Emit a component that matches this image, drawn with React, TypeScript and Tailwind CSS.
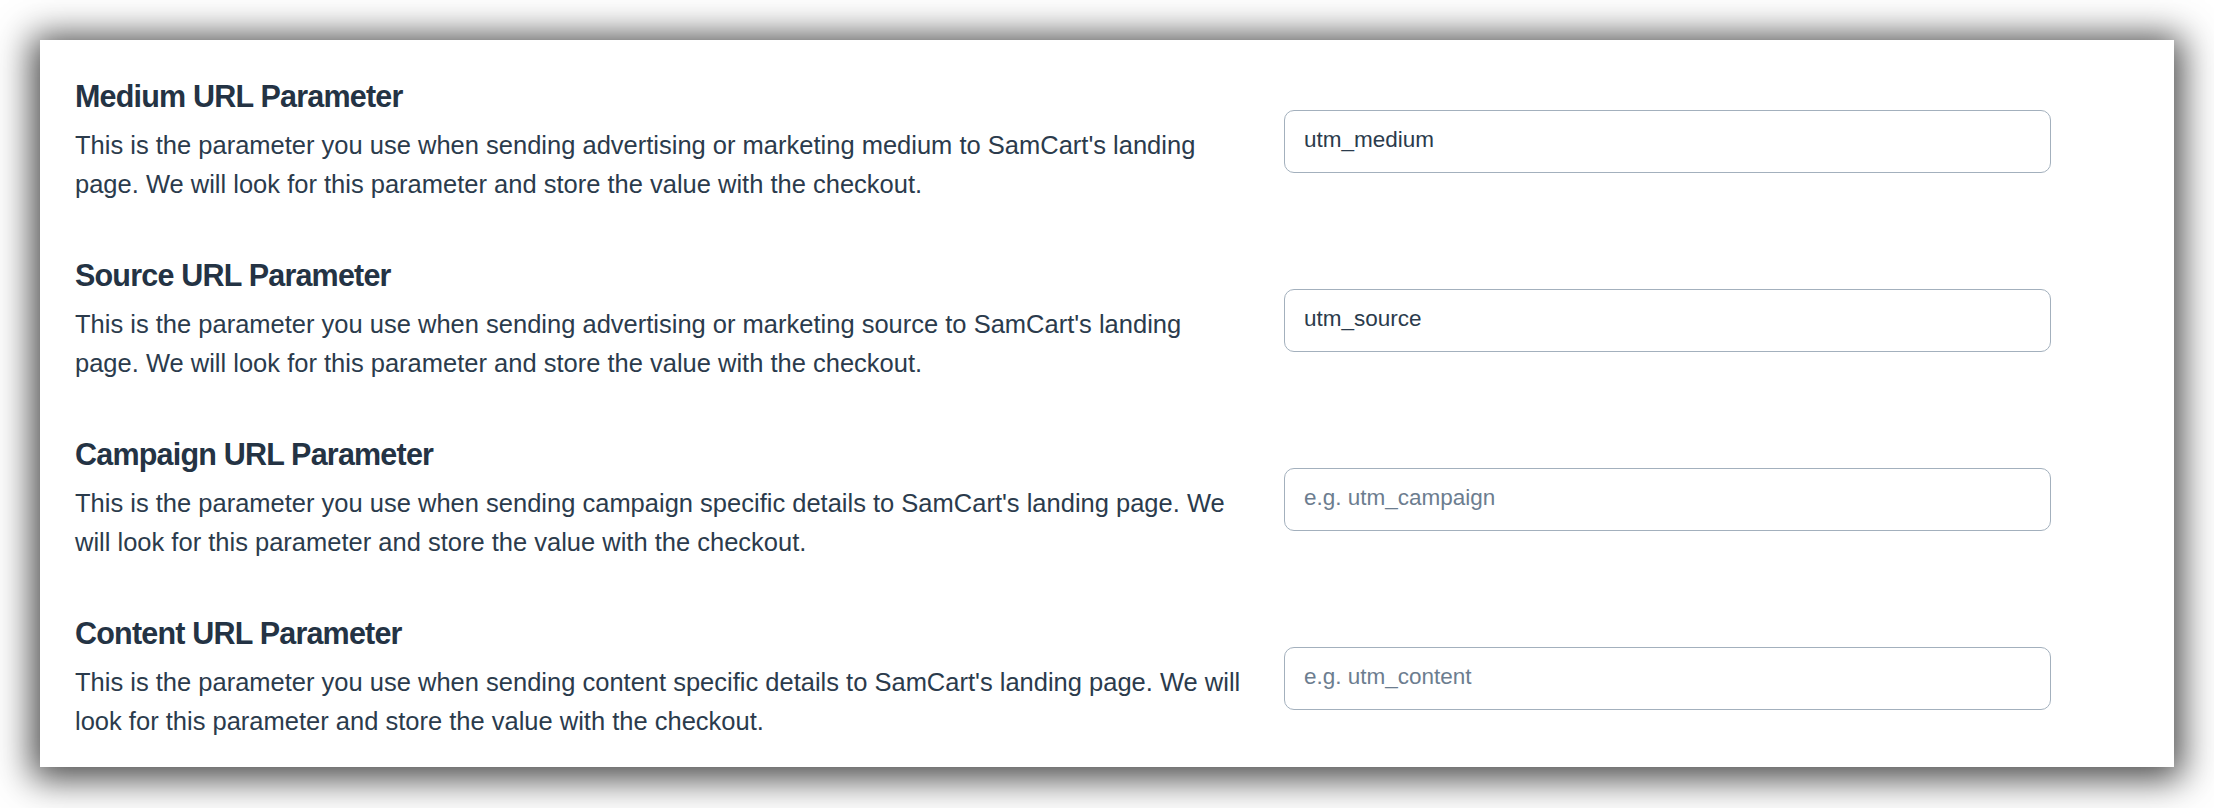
import React from "react";

type Param = {
  title: string;
  description: string;
  value?: string;
  placeholder: string;
};

const params: Param[] = [
  {
    title: "Medium URL Parameter",
    description:
      "This is the parameter you use when sending advertising or marketing medium to SamCart's landing page. We will look for this parameter and store the value with the checkout.",
    value: "utm_medium",
    placeholder: "e.g. utm_medium",
  },
  {
    title: "Source URL Parameter",
    description:
      "This is the parameter you use when sending advertising or marketing source to SamCart's landing page. We will look for this parameter and store the value with the checkout.",
    value: "utm_source",
    placeholder: "e.g. utm_source",
  },
  {
    title: "Campaign URL Parameter",
    description:
      "This is the parameter you use when sending campaign specific details to SamCart's landing page. We will look for this parameter and store the value with the checkout.",
    placeholder: "e.g. utm_campaign",
  },
  {
    title: "Content URL Parameter",
    description:
      "This is the parameter you use when sending content specific details to SamCart's landing page. We will look for this parameter and store the value with the checkout.",
    placeholder: "e.g. utm_content",
  },
];

export default function App() {
  return (
    <div className="min-h-[808px] bg-white px-10 py-10 font-['Liberation_Sans',Arial,sans-serif]">
      <div className="flex flex-col gap-[53px] bg-white pb-[26px] pl-[35px] pr-[123px] pt-[38px] shadow-[0_4px_34px_8px_rgba(0,0,0,0.72)]">
        {params.map((param) => (
          <div className="flex items-center gap-[34px]" key={param.title}>
            <div className="min-w-0 flex-1">
              <h3 className="text-[30.5px] font-bold leading-[36px] tracking-[-0.8px] text-[#243344]">
                {param.title}
              </h3>
              <p className="mt-[12px] text-[25.5px] leading-[39px] text-[#2b3b4c]">
                {param.description}
              </p>
            </div>
            <input
              className="h-[63px] w-[767px] shrink-0 rounded-[10px] border border-[#a3b0bd] bg-white px-[19px] pb-[3px] text-[22.5px] text-[#2b3b4c] outline-none placeholder:text-[#6c7d8f]"
              defaultValue={param.value}
              placeholder={param.placeholder}
              type="text"
            />
          </div>
        ))}
      </div>
    </div>
  );
}
